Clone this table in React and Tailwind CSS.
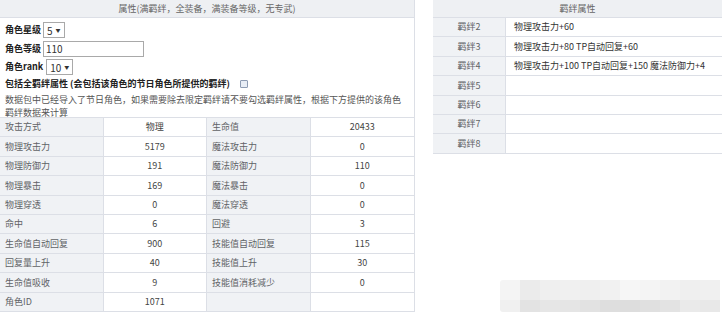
const stats = [
  ["攻击方式", "物理", "生命值", "20433"],
  ["物理攻击力", "5179", "魔法攻击力", "0"],
  ["物理防御力", "191", "魔法防御力", "110"],
  ["物理暴击", "169", "魔法暴击", "0"],
  ["物理穿透", "0", "魔法穿透", "0"],
  ["命中", "6", "回避", "3"],
  ["生命值自动回复", "900", "技能值自动回复", "115"],
  ["回复量上升", "40", "技能值上升", "30"],
  ["生命值吸收", "9", "技能值消耗减少", "0"],
  ["角色ID", "1071", "", ""],
];

const bonds = [
  ["羁绊2", "物理攻击力+60"],
  ["羁绊3", "物理攻击力+80 TP自动回复+60"],
  ["羁绊4", "物理攻击力+100 TP自动回复+150 魔法防御力+4"],
  ["羁绊5", ""],
  ["羁绊6", ""],
  ["羁绊7", ""],
  ["羁绊8", ""],
];

const mosaicTop = [
  "bg-[#f4f4f4]", "bg-[#ebebeb]", "bg-[#efefef]", "bg-[#f0f0f0]", "bg-[#efefef]", "bg-[#f1f1f1]",
  "bg-[#f6f6f6]", "bg-[#f4f4f4]", "bg-[#f2f2f2]", "bg-[#efefef]", "bg-[#f0f0f0]",
];
const mosaicBottom = [
  "bg-[#f0f0f0]", "bg-[#e3e3e3]", "bg-[#e6e6e6]", "bg-[#e5e5e5]", "bg-[#e2e2e2]", "bg-[#dedede]",
  "bg-[#dddddd]", "bg-[#e0e0e0]", "bg-[#e3e3e3]", "bg-[#eaeaea]", "bg-[#e8e8e8]",
];

function Select({ value }) {
  return (
    <span className="inline-flex items-center h-[16px] px-[3px] gap-[3px] border border-[#a9a9a9] bg-white text-[10px] text-[#333] font-normal">
      {value}
      <span className="text-[5px] text-[#333]">▼</span>
    </span>
  );
}

export default function App() {
  return (
    <div
      className="relative w-[727px] h-[312px] bg-white overflow-hidden flex text-[9px] text-[#606266]"
      style={{ fontFamily: '"Noto Sans CJK SC", "Noto Sans", sans-serif' }}
    >
      {/* Left: attributes */}
      <div className="w-[415px] border-r border-[#dcdfe6] flex flex-col">
        <div className="h-[18px] bg-[#eef0f3] border-b border-[#dcdfe6] flex items-center justify-center text-[#666]">
          属性(满羁绊，全装备，满装备等级，无专武)
        </div>
        <div className="h-[99px] pl-[5px] pt-[3px] text-[#222]">
          <div className="flex items-center gap-[2px] h-[18px] font-bold">
            角色星级 <Select value="5" />
          </div>
          <div className="flex items-center gap-[2px] h-[19px] font-bold">
            角色等级
            <span className="inline-flex items-center w-[101px] h-[16px] px-[2px] border border-[#a9a9a9] bg-white text-[10px] font-normal text-[#333]">
              110
            </span>
          </div>
          <div className="flex items-center gap-[3px] h-[18px] font-bold">
            角色rank <Select value="10" />
          </div>
          <div className="flex items-center h-[16px] font-bold">
            包括全羁绊属性 (会包括该角色的节日角色所提供的羁绊)
            <span className="ml-[10px] w-[8px] h-[8px] border border-[#8e9cb3] bg-[#e8edf5] rounded-[1px]" />
          </div>
          <div className="leading-[13px] pt-[1px] text-[#555] pr-[6px]">
            数据包中已经导入了节日角色，如果需要除去限定羁绊请不要勾选羁绊属性，根据下方提供的该角色羁绊数据来计算
          </div>
        </div>
        <div className="border-t border-[#dcdfe6]">
          {stats.map((row, i) => (
            <div key={i} className="grid grid-cols-4 h-[19.4px] border-b border-[#dcdfe6]">
              <div className="bg-[#f0f2f5] pl-[5px] flex items-center border-r border-[#dcdfe6]">{row[0]}</div>
              <div className="flex items-center justify-center border-r border-[#dcdfe6] text-[#444]">{row[1]}</div>
              <div className="bg-[#f0f2f5] pl-[5px] flex items-center border-r border-[#dcdfe6]">{row[2]}</div>
              <div className="flex items-center justify-center text-[#444]">{row[3]}</div>
            </div>
          ))}
        </div>
      </div>

      {/* Right: bonds */}
      <div className="ml-[18px] w-[289px] flex flex-col">
        <div className="h-[18px] bg-[#eef0f3] border-b border-[#dcdfe6] flex items-center justify-center text-[#666]">
          羁绊属性
        </div>
        {bonds.map(([label, value]) => (
          <div key={label} className="flex h-[19.4px] border-b border-[#dcdfe6]">
            <div className="w-[73px] bg-[#f0f2f5] flex items-center justify-center border-r border-[#dcdfe6]">
              {label}
            </div>
            <div className="flex-1 flex items-center pl-[8px] text-[#333]">{value}</div>
          </div>
        ))}
      </div>

      {/* pixelated watermark */}
      <div className="absolute left-[500px] top-[280px] flex flex-col rounded-l-[3px] overflow-hidden">
        <div className="flex">
          {mosaicTop.map((c, i) => (
            <div key={i} className={`w-[20px] h-[20px] ${c}`} />
          ))}
        </div>
        <div className="flex">
          {mosaicBottom.map((c, i) => (
            <div key={i} className={`w-[20px] h-[12px] ${c}`} />
          ))}
        </div>
      </div>
    </div>
  );
}
